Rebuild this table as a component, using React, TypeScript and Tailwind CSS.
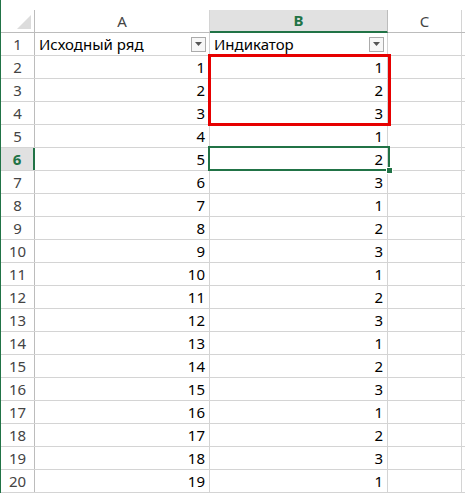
import React from "react";

const nums = Array.from({ length: 19 }, (_, i) => i + 1);

function FilterBtn() {
  return (
    <div className="w-[15px] h-[15px] border border-[#ababab] bg-[#f7f7f7] flex items-center justify-center shrink-0">
      <svg width="7" height="4" viewBox="0 0 7 4">
        <path d="M0 0 L7 0 L3.5 4 Z" fill="#555" />
      </svg>
    </div>
  );
}

export default function App() {
  const line = "border-b border-[#d4d4d4]";
  return (
    <div
      className="relative w-[465px] h-[493px] overflow-hidden bg-white text-[15px] text-black border-l border-[#217346]"
      style={{ fontFamily: '"Noto Sans", "Open Sans", sans-serif' }}
    >
      <div className="h-[10px]" />
      {/* column header */}
      <div className="flex h-[23px] border-b border-[#bcbcbc] text-[#444]">
        <div className="w-[34px] border-r border-[#bcbcbc] flex items-end justify-end pr-[3px] pb-[3px]">
          <svg width="14" height="14" viewBox="0 0 14 14">
            <path d="M14 0 L14 14 L0 14 Z" fill="#dcdcdc" />
          </svg>
        </div>
        <div className="w-[175px] border-r border-[#d4d4d4] flex items-center justify-center">A</div>
        <div className="w-[178px] border-r border-[#bcbcbc] bg-[#e1e1e1] border-b-2 border-b-[#217346] -mb-px flex items-center justify-center font-bold text-[#217346]">
          B
        </div>
        <div className="w-[74px] border-r border-[#d4d4d4] flex items-center justify-center">C</div>
        <div className="flex-1" />
      </div>
      {/* row 1 */}
      <div className={`flex h-[23px] ${line}`}>
        <div className="w-[34px] border-r border-[#bcbcbc] flex items-center justify-center text-[#444]">1</div>
        <div className="w-[175px] border-r border-[#d4d4d4] flex items-center justify-between pl-[4px] pr-[3px]">
          <span>Исходный ряд</span>
          <FilterBtn />
        </div>
        <div className="w-[178px] border-r border-[#d4d4d4] flex items-center justify-between pl-[4px] pr-[3px]">
          <span>Индикатор</span>
          <FilterBtn />
        </div>
        <div className="w-[74px] border-r border-[#d4d4d4]" />
        <div className="flex-1" />
      </div>
      {nums.map((n) => {
        const sel = n + 1 === 6;
        return (
          <div key={n} className={`flex h-[23px] ${line}`}>
            {sel ? (
              <div className="w-[34px] border-r-2 border-[#217346] bg-[#e1e1e1] flex items-center justify-center font-bold text-[#217346]">
                {n + 1}
              </div>
            ) : (
              <div className="w-[34px] border-r border-[#bcbcbc] flex items-center justify-center text-[#444]">
                {n + 1}
              </div>
            )}
            <div className="w-[175px] border-r border-[#d4d4d4] flex items-center justify-end pr-[4px]">{n}</div>
            <div className="w-[178px] border-r border-[#d4d4d4] flex items-center justify-end pr-[4px]">
              {((n - 1) % 3) + 1}
            </div>
            <div className="w-[74px] border-r border-[#d4d4d4]" />
            <div className="flex-1" />
          </div>
        );
      })}
      {/* red outline B2:B4 */}
      <div className="absolute left-[207px] top-[54px] w-[183px] h-[72px] border-[3px] border-[#e60000] pointer-events-none" />
      {/* selection B6 */}
      <div className="absolute left-[207px] top-[146px] w-[182px] h-[25px] border-2 border-[#217346] pointer-events-none" />
      <div className="absolute left-[385px] top-[167px] w-[7px] h-[7px] bg-[#217346] border border-white" />
    </div>
  );
}
